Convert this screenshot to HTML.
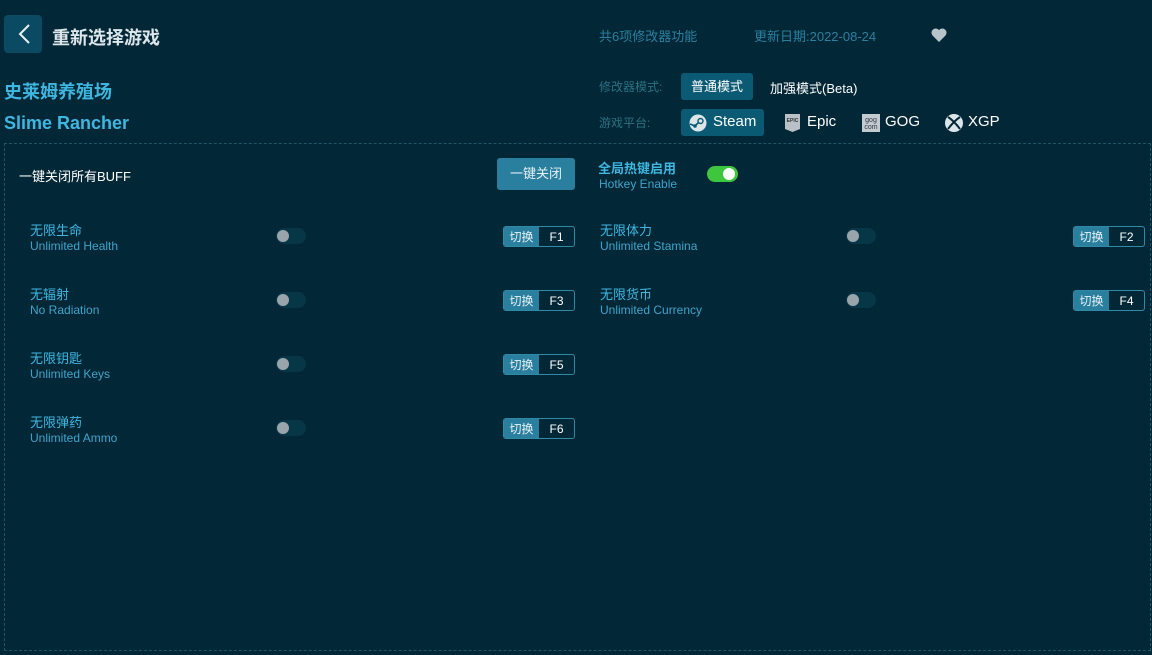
<!DOCTYPE html>
<html><head><meta charset="utf-8"><style>
*{margin:0;padding:0;box-sizing:border-box}
body{width:1152px;height:655px;background:#022837;font-family:"Liberation Sans","Noto Sans CJK SC",sans-serif;position:relative;overflow:hidden;color:#fff}
.a{position:absolute;white-space:nowrap}
.panel{position:absolute;left:4px;top:143px;width:1147px;height:508px;border:1px dashed #1f5566}
.cn{font-size:13px;color:#3fb6e0}
.en{font-size:12px;color:#3fa3c9}
.sw{position:absolute;width:30px;height:16px;border-radius:8px;background:#073647}
.sw::after{content:"";position:absolute;left:1px;top:2px;width:12px;height:12px;border-radius:6px;background:#9aa5ab}
.key{position:absolute;width:72px;height:21px;border:1px solid #2f8aa8;border-radius:3px;font-size:12px;display:flex}
.key span:first-child{background:#2a7f9e;width:35px;display:flex;align-items:center;justify-content:center;color:#e6f2f7}
.key span:last-child{flex:1;display:flex;align-items:center;justify-content:center;color:#fff}
</style></head><body>
<div class="a" style="left:4px;top:15px;width:38px;height:38px;background:#0b4a63;border-radius:4px">
<svg width="38" height="38"><path d="M25 10 L16 19 L25 28" stroke="#e8f0f4" stroke-width="2" fill="none"/></svg></div>
<div class="a" style="left:52px;top:24px;font-size:18px;font-weight:bold;color:#dde6ea">重新选择游戏</div>
<div class="a" style="left:599px;top:26px;font-size:13px;color:#2a7f9e">共6项修改器功能</div>
<div class="a" style="left:754px;top:26px;font-size:13px;color:#2a7f9e">更新日期:2022-08-24</div>
<svg class="a" style="left:931px;top:28px" width="16" height="14" viewBox="0 0 16 14"><path d="M8 14 L1.5 7.5 A4 4 0 0 1 8 2 A4 4 0 0 1 14.5 7.5 Z" fill="#b8c4ca"/></svg>
<div class="a" style="left:4px;top:78px;font-size:18px;font-weight:bold;color:#3fb6e0">史莱姆养殖场</div>
<div class="a" style="left:4px;top:113px;font-size:18px;font-weight:bold;color:#3fb6e0">Slime Rancher</div>
<div class="a" style="left:599px;top:78px;font-size:12px;color:#2a7080">修改器模式:</div>
<div class="a" style="left:681px;top:73px;width:72px;height:27px;background:#0b5a74;border-radius:3px;font-size:13px;color:#fff;text-align:center;line-height:27px">普通模式</div>
<div class="a" style="left:770px;top:78px;font-size:13px;color:#fff">加强模式(Beta)</div>
<div class="a" style="left:599px;top:114px;font-size:12px;color:#2a7080">游戏平台:</div>
<div class="a" style="left:681px;top:109px;width:83px;height:27px;background:#0b5a74;border-radius:3px"></div>
<svg class="a" style="left:689px;top:114px" width="18" height="18" viewBox="0 0 18 18"><circle cx="9" cy="9" r="8.5" fill="#dce6ea"/><circle cx="11.5" cy="7" r="2.5" fill="none" stroke="#0b5a74" stroke-width="1.4"/><path d="M1 10 L6 12 L10 8" stroke="#0b5a74" stroke-width="1.6" fill="none"/><circle cx="6" cy="12" r="1.8" fill="#0b5a74"/></svg>
<div class="a" style="left:713px;top:113px;font-size:15px;color:#fff">Steam</div>
<svg class="a" style="left:785px;top:114px" width="15" height="18" viewBox="0 0 15 18"><path d="M0 0H15V15L7.5 18L0 15Z" fill="#b9c1c6"/><text x="7.5" y="8" font-size="5" text-anchor="middle" fill="#333" font-family="Liberation Sans" font-weight="bold">EPIC</text></svg>
<div class="a" style="left:807px;top:113px;font-size:15px;color:#fff">Epic</div>
<svg class="a" style="left:862px;top:114px" width="18" height="18"><rect width="18" height="18" fill="#c2cbd0"/><text x="9" y="8" font-size="7" text-anchor="middle" fill="#334" font-family="Liberation Sans">gog</text><text x="9" y="15" font-size="7" text-anchor="middle" fill="#334" font-family="Liberation Sans">com</text></svg>
<div class="a" style="left:885px;top:113px;font-size:15px;color:#fff">GOG</div>
<svg class="a" style="left:945px;top:114px" width="18" height="18" viewBox="0 0 18 18"><circle cx="9" cy="9" r="9" fill="#dce6ea"/><path d="M3 3 Q9 7 15 15 M15 3 Q9 7 3 15" stroke="#022837" stroke-width="2" fill="none"/></svg>
<div class="a" style="left:968px;top:113px;font-size:15px;color:#fff">XGP</div>
<div class="panel"></div>
<div class="a" style="left:19px;top:166px;font-size:13px;color:#fff">一键关闭所有BUFF</div>
<div class="a" style="left:497px;top:158px;width:78px;height:32px;background:#2a7f9e;border-radius:3px;font-size:13px;color:#e6f2f7;text-align:center;line-height:32px">一键关闭</div>
<div class="a" style="left:598px;top:158px;font-size:13px;font-weight:bold;color:#3fb6e0">全局热键启用</div>
<div class="a en" style="left:599px;top:177px">Hotkey Enable</div>
<div class="a" style="left:707px;top:166px;width:31px;height:16px;border-radius:8px;background:#3ec63e"><div style="position:absolute;right:3px;top:2px;width:12px;height:12px;border-radius:6px;background:#fff"></div></div>

<div class="a cn" style="left:30px;top:220px">无限生命</div><div class="a en" style="left:30px;top:239px">Unlimited Health</div>
<div class="sw" style="left:276px;top:228px"></div><div class="key" style="left:503px;top:226px"><span>切换</span><span>F1</span></div>
<div class="a cn" style="left:30px;top:284px">无辐射</div><div class="a en" style="left:30px;top:303px">No Radiation</div>
<div class="sw" style="left:276px;top:292px"></div><div class="key" style="left:503px;top:290px"><span>切换</span><span>F3</span></div>
<div class="a cn" style="left:30px;top:348px">无限钥匙</div><div class="a en" style="left:30px;top:367px">Unlimited Keys</div>
<div class="sw" style="left:276px;top:356px"></div><div class="key" style="left:503px;top:354px"><span>切换</span><span>F5</span></div>
<div class="a cn" style="left:30px;top:412px">无限弹药</div><div class="a en" style="left:30px;top:431px">Unlimited Ammo</div>
<div class="sw" style="left:276px;top:420px"></div><div class="key" style="left:503px;top:418px"><span>切换</span><span>F6</span></div>

<div class="a cn" style="left:600px;top:220px">无限体力</div><div class="a en" style="left:600px;top:239px">Unlimited Stamina</div>
<div class="sw" style="left:846px;top:228px"></div><div class="key" style="left:1073px;top:226px"><span>切换</span><span>F2</span></div>
<div class="a cn" style="left:600px;top:284px">无限货币</div><div class="a en" style="left:600px;top:303px">Unlimited Currency</div>
<div class="sw" style="left:846px;top:292px"></div><div class="key" style="left:1073px;top:290px"><span>切换</span><span>F4</span></div>
</body></html>
